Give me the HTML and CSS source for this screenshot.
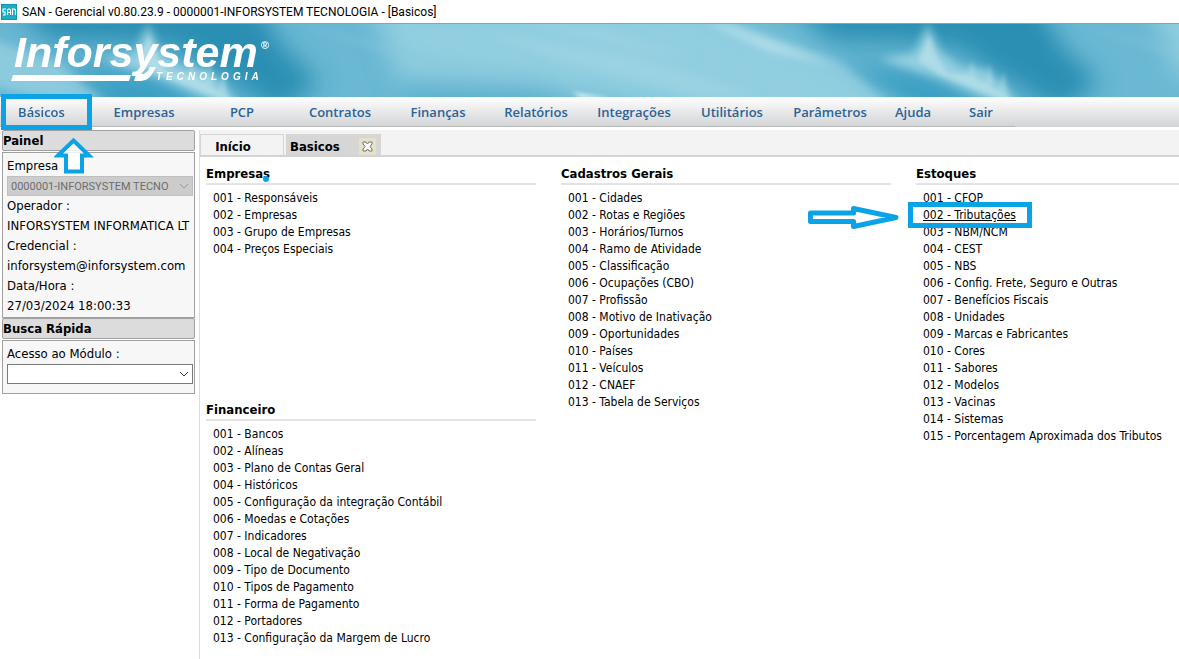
FILE: index.html
```
<!DOCTYPE html>
<html lang="pt-BR">
<head>
<meta charset="utf-8">
<title>SAN - Gerencial</title>
<link rel="stylesheet" href="styles.css">
</head>
<body>
<div class="titlebar">
  <svg class="app-icon" width="16" height="16" viewBox="0 0 16 16" aria-hidden="true"><rect width="16" height="16" fill="#1596ad"/><rect x="1" y="1" width="14" height="14" fill="#1badc4"/><path d="M5 5H2v3h2v3H2M6.500 11V6l1-1h1l1 1v5M7 8.500h2M11.500 11V5h2l1 1v5" fill="none" stroke="#fff" stroke-width="1.100"/></svg>
  <span>SAN - Gerencial v0.80.23.9 - 0000001-INFORSYSTEM TECNOLOGIA - [Basicos]</span>
</div>

<header class="banner">
  <svg class="sky" viewBox="0 0 1179 74" preserveAspectRatio="xMinYMid slice" aria-hidden="true">
    <defs>
      <filter id="b2" x="-30%" y="-60%" width="160%" height="220%"><feGaussianBlur stdDeviation="2"/></filter>
      <filter id="b4" x="-30%" y="-60%" width="160%" height="220%"><feGaussianBlur stdDeviation="4"/></filter>
      <filter id="b12" x="-30%" y="-80%" width="160%" height="260%"><feGaussianBlur stdDeviation="12"/></filter>
      <g id="cloud">
        <g filter="url(#b12)">
          <path d="M370-20L690-20L800 30L930 100L720 100L600 74L400 60Z" fill="#90cee0"/>
          <path d="M0-30H255L280 20L320 60L280 90L215 50L175 25L120 20L50 18Z" fill="#2a8fb3"/>
          <path d="M60 40L150 50L240 96L120 96Z" fill="#3b9fc2"/>
          <path d="M400 56L540 62L640 96L420 96Z" fill="#5bb0cd"/>
        </g>
        <ellipse cx="240" cy="22" rx="22" ry="14" fill="#2b8fb2" filter="url(#b4)"/>
        <g filter="url(#b4)">
          <path d="M-80-4L-55 0L60 40L105 80L60 80L-10 62Z" fill="#a3d6e5" opacity=".6"/>
          <path d="M100 36L134 30L148 0L160 28L180 44L205 46L224 62L240 84L215 80L160 56Z" fill="#a6d9e6" opacity=".75"/>
          <path d="M480 8L640 34L760 72L700 74L560 38Z" fill="#a4d7e6" opacity=".5"/>
          <path d="M520-2L600 4L700 36L640 30Z" fill="#a4d7e6" opacity=".35"/>
          <path d="M300 2L420 30L560 64L430 46Z" fill="#86c8dc" opacity=".4"/>
        </g>
        <g filter="url(#b2)">
          <path d="M138 38L149 12L158 36L168 50L188 52L205 60L240 82L200 68L160 52Z" fill="#bfe4ed" opacity=".6"/>
          <path d="M188 54L192 36L196 56ZM205 60L210 40L213 64ZM218 68L224 48L228 76Z" fill="#b0dde9" opacity=".5"/>
        </g>
      </g>
    </defs>
    <rect width="1179" height="74" fill="#6ab8d3"/>
    <use href="#cloud" x="780"/>
    <use href="#cloud"/>
    <path d="M705-2L730 3L835 42L770 28Z" fill="#b4dfeb" filter="url(#b4)"/>
    <path d="M572 69L612 75L582 76Z" fill="#d0edf4" filter="url(#b2)"/>
    <rect width="1179" height="1" fill="#7ba8b5"/>
  </svg>
  <svg class="logo" width="272" height="74" viewBox="0 0 272 74" role="img" aria-label="Inforsystem Tecnologia">
    <text class="logo-name" x="14" y="44">Inforsystem</text>
    <path d="M13 52H131L129 58H11Z" fill="#fff"/>
    <path d="M136 51H142Q148 50 150 44H156Q150 58 141 58H134Z" fill="#fff"/>
    <text class="logo-sub" x="156" y="57">TECNOLOGIA</text>
    <text class="logo-mark" x="261" y="26">®</text>
  </svg>
</header>

<nav class="menu">
  <a href="#" class="current">Básicos
    <span class="mark mark-menu"></span>
    <svg class="arrow-up" width="40" height="38" viewBox="0 0 40 38" aria-hidden="true"><path d="M19.500 3.500L35 18.500H28V34.500H12V18.500H4Z" fill="#fff" fill-opacity=".8" stroke="#0aa3e6" stroke-width="4"/></svg>
  </a>
  <a href="#">Empresas</a><a href="#">PCP</a><a href="#">Contratos</a><a href="#">Finanças</a><a href="#">Relatórios</a><a href="#">Integrações</a><a href="#">Utilitários</a><a href="#">Parâmetros</a><a href="#" class="short">Ajuda</a><a href="#" class="short">Sair</a>
</nav>

<div class="workspace">
  <aside class="sidebar">
    <h2>Painel</h2>
    <div class="box">
      <label for="empresa">Empresa</label>
      <div class="select disabled">
        <select id="empresa" disabled><option>0000001-INFORSYSTEM TECNO</option></select>
        <svg width="10" height="6" viewBox="0 0 10 6" aria-hidden="true"><path d="M1 1l4 4 4-4"/></svg>
      </div>
      <p>Operador :</p>
      <p>INFORSYSTEM INFORMATICA LT</p>
      <p>Credencial :</p>
      <p>inforsystem@inforsystem.com</p>
      <p>Data/Hora :</p>
      <p>27/03/2024 18:00:33</p>
    </div>
    <h2>Busca Rápida</h2>
    <div class="box search">
      <label for="modulo">Acesso ao Módulo :</label>
      <div class="select">
        <select id="modulo"><option></option></select>
        <svg width="10" height="6" viewBox="0 0 10 6" aria-hidden="true"><path d="M1 1l4 4 4-4"/></svg>
      </div>
    </div>
  </aside>

  <main class="content">
    <div class="tabs">
      <button type="button" class="tab">Início</button>
      <div class="tab active">
        <button type="button" class="tab-name">Basicos</button>
        <button type="button" class="close" aria-label="Fechar"><svg width="11" height="11" viewBox="0 0 11 11" aria-hidden="true"><path d="M1 1H4L5.500 3L7 1H10V3L8 5.500L10 8V10H7L5.500 8L4 10H1V8L3 5.500L1 3Z" fill="#fff" stroke="#77715e"/></svg></button>
      </div>
    </div>
    <div class="columns">
      <div class="column">
        <section class="group first">
          <h3>Empresas<span class="dot"></span></h3>
          <ul>
            <li><a href="#">001 - Responsáveis</a></li>
            <li><a href="#">002 - Empresas</a></li>
            <li><a href="#">003 - Grupo de Empresas</a></li>
            <li><a href="#">004 - Preços Especiais</a></li>
          </ul>
        </section>
        <section class="group">
          <h3>Financeiro</h3>
          <ul>
            <li><a href="#">001 - Bancos</a></li>
            <li><a href="#">002 - Alíneas</a></li>
            <li><a href="#">003 - Plano de Contas Geral</a></li>
            <li><a href="#">004 - Históricos</a></li>
            <li><a href="#">005 - Configuração da integração Contábil</a></li>
            <li><a href="#">006 - Moedas e Cotações</a></li>
            <li><a href="#">007 - Indicadores</a></li>
            <li><a href="#">008 - Local de Negativação</a></li>
            <li><a href="#">009 - Tipo de Documento</a></li>
            <li><a href="#">010 - Tipos de Pagamento</a></li>
            <li><a href="#">011 - Forma de Pagamento</a></li>
            <li><a href="#">012 - Portadores</a></li>
            <li><a href="#">013 - Configuração da Margem de Lucro</a></li>
          </ul>
        </section>
      </div>
      <div class="column">
        <section class="group">
          <h3>Cadastros Gerais</h3>
          <ul>
            <li><a href="#">001 - Cidades</a></li>
            <li><a href="#">002 - Rotas e Regiões</a></li>
            <li><a href="#">003 - Horários/Turnos</a></li>
            <li><a href="#">004 - Ramo de Atividade</a></li>
            <li><a href="#">005 - Classificação</a></li>
            <li><a href="#">006 - Ocupações (CBO)</a></li>
            <li><a href="#">007 - Profissão</a></li>
            <li><a href="#">008 - Motivo de Inativação</a></li>
            <li><a href="#">009 - Oportunidades</a></li>
            <li><a href="#">010 - Países</a></li>
            <li><a href="#">011 - Veículos</a></li>
            <li><a href="#">012 - CNAEF</a></li>
            <li><a href="#">013 - Tabela de Serviços</a></li>
          </ul>
        </section>
      </div>
      <div class="column last">
        <section class="group">
          <h3>Estoques</h3>
          <ul>
            <li><a href="#">001 - CFOP</a></li>
            <li class="marked"><a href="#">002 - Tributações</a>
              <span class="mark mark-item"></span>
              <svg class="arrow-right" width="92" height="28" viewBox="0 0 92 28" aria-hidden="true"><path d="M2.500 9H45.500V4.500L88 13.500L45.500 22.500V17.500H2.500Z" fill="#fff" stroke="#0aa3e6" stroke-width="5" stroke-linejoin="round"/></svg>
            </li>
            <li><a href="#">003 - NBM/NCM</a></li>
            <li><a href="#">004 - CEST</a></li>
            <li><a href="#">005 - NBS</a></li>
            <li><a href="#">006 - Config. Frete, Seguro e Outras</a></li>
            <li><a href="#">007 - Benefícios Fiscais</a></li>
            <li><a href="#">008 - Unidades</a></li>
            <li><a href="#">009 - Marcas e Fabricantes</a></li>
            <li><a href="#">010 - Cores</a></li>
            <li><a href="#">011 - Sabores</a></li>
            <li><a href="#">012 - Modelos</a></li>
            <li><a href="#">013 - Vacinas</a></li>
            <li><a href="#">014 - Sistemas</a></li>
            <li><a href="#">015 - Porcentagem Aproximada dos Tributos</a></li>
          </ul>
        </section>
      </div>
    </div>
  </main>
</div>
</body>
</html>
```
FILE: styles.css
```
* { box-sizing: border-box; }
body {
  margin: 0;
  min-height: 100vh;
  display: flex;
  flex-direction: column;
  background: #fff;
  color: #000;
  font-family: "DejaVu Sans Condensed", "Noto Sans", sans-serif;
  font-size: 12px;
}
a { color: inherit; text-decoration: none; }
button { border: 0; padding: 0; background: none; color: inherit; font: inherit; }
h2, h3, p, ul { margin: 0; padding: 0; }
ul { list-style: none; }

.titlebar {
  display: flex;
  align-items: center;
  gap: 5px;
  height: 23px;
  padding-left: 1px;
  font-family: Roboto, sans-serif;
  font-size: 12px;
  white-space: nowrap;
}

.banner { position: relative; height: 74px; overflow: hidden; }
.sky { position: absolute; inset: 0; width: 100%; height: 100%; }
.logo { position: relative; display: block; }
.logo text { fill: #fff; font-family: "Liberation Sans", Arial, sans-serif; font-weight: bold; }
.logo-name { font-size: 43px; font-style: italic; }
.logo-sub { font-size: 10px; font-style: italic; letter-spacing: 4px; }
.logo .logo-mark { font-size: 11px; }

.menu {
  display: flex;
  height: 30px;
  background: linear-gradient(#fefefe, #d2d3d5);
  color: #2a6395;
  font-family: "Open Sans", sans-serif;
  font-size: 13px;
  font-weight: 600;
  line-height: 30px;
  text-align: center;
}
.menu a { flex: 0 0 98px; border-bottom: 1px solid #b8b9bb; }
.menu .short { flex-basis: 68px; }
.menu .current { position: relative; flex-basis: 95px; padding-right: 12px; }
.mark { position: absolute; border: 5px solid #0aa3e6; pointer-events: none; }
.mark-menu { left: 1px; top: -3px; width: 91px; height: 36px; z-index: 2; }
.arrow-up { position: absolute; left: 54px; top: 40px; z-index: 2; }

.workspace { flex: 1; display: flex; gap: 4px; padding-top: 3px; }

.sidebar { flex: 0 0 195px; min-width: 0; padding-left: 2px; font-size: 13px; }
.sidebar h2 {
  height: 21px;
  border: 1px solid #a0a0a0;
  border-radius: 2px;
  background: #dcdcdc;
  font-size: 13px;
  line-height: 19px;
}
.box {
  margin-top: 1px;
  padding: 3px 0 1px 4px;
  border: 1px solid #a0a0a0;
  background: #f7f7f7;
  line-height: 20px;
  white-space: nowrap;
  overflow: hidden;
}
.box label { display: block; }
.search { padding-bottom: 9px; }
.select { position: relative; height: 20px; margin-right: 1px; }
.select select {
  display: block;
  width: 100%;
  height: 20px;
  padding: 0 3px;
  appearance: none;
  border: 1px solid #7a7a7a;
  border-radius: 0;
  background: #fff;
  font-family: Roboto, sans-serif;
  font-size: 11px;
}
.select.disabled select { border-color: #bfbfbf; background: #ccc; color: #6d6d6d; opacity: 1; }
.select svg { position: absolute; right: 4px; top: 7px; fill: none; stroke: #444; }
.select.disabled svg { stroke: #999; }

.content { flex: 1; min-width: 0; border-left: 1px solid #dcdcdc; }
.tabs {
  display: flex;
  gap: 2px;
  height: 27px;
  padding-top: 4px;
  border-bottom: 2px solid #d3d3d3;
  background: #f3f3f3;
  font-size: 13px;
  font-weight: bold;
}
.tab { height: 21px; width: 84px; padding: 2px 18px 0 0; border: 1px solid #d6d6d6; border-bottom: 0; }
.active {
  display: flex;
  align-items: center;
  justify-content: space-between;
  width: 95px;
  padding: 2px 4px 0 3px;
  background: #d6d6d6;
}
.close { display: flex; align-items: center; justify-content: center; width: 17px; height: 17px; background: #e5e1cf; }

.columns { display: flex; gap: 25px; padding: 8px 0 0 6px; }
.column { flex: 0 0 330px; }
.last { flex: 1 1 0; min-width: 0; }
.first { min-height: 236px; }
.group h3 {
  height: 20px;
  margin-bottom: 5px;
  border-bottom: 2px solid #e4e4e4;
  font-size: 13px;
  line-height: 17px;
}
.group ul { padding-left: 7px; line-height: 17px; white-space: nowrap; }
.dot { display: inline-block; width: 6px; height: 6px; margin-left: -7px; border-radius: 3px; background: #0aa3e6; vertical-align: -4px; }
.marked { position: relative; }
.marked a { text-decoration: underline; }
.mark-item { left: -15px; top: -5px; width: 124px; height: 26px; }
.arrow-right { position: absolute; left: -115px; top: -3px; }
```
